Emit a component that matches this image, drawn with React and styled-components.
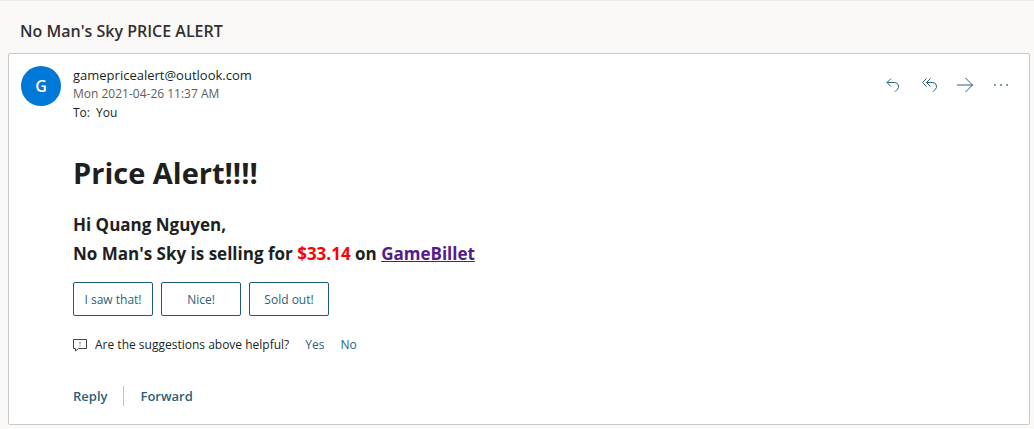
import React from "react";
import styled, { createGlobalStyle } from "styled-components";

const GlobalStyle = createGlobalStyle`
  * { box-sizing: border-box; }
  body {
    margin: 0;
    background: #faf9f8;
    color: #201f1e;
    font-family: "Segoe UI", "Open Sans", "Noto Sans", sans-serif;
    font-size: 12px;
    line-height: 20px;
  }
  h1, h2, p { margin: 0; }
`;

const Pane = styled.main`
  border-top: 1px solid #edebe9;
  padding: 0 4px 4px 8px;
`;

const Subject = styled.h1`
  padding: 18px 12px 10px;
  font-size: 16px;
  line-height: 24px;
  font-weight: 600;
  color: #323130;
`;

const Card = styled.article`
  background: #fff;
  border: 1px solid #c8c8c8;
  border-radius: 2px;
  padding: 11px 16px 18px 12px;
`;

const Header = styled.header`
  display: flex;
  gap: 12px;
`;

const Avatar = styled.div`
  width: 40px;
  height: 40px;
  margin-top: 1px;
  border-radius: 50%;
  background: #0078d7;
  color: #fff;
  font-size: 16px;
  font-weight: 600;
  line-height: 40px;
  text-align: center;
`;

const Meta = styled.div`
  flex: 1;
`;

const Sender = styled.div`
  font-size: 13px;
`;

const Sent = styled.time`
  display: block;
  line-height: 18px;
  color: #605e5c;
`;

const Recipients = styled.div`
  display: flex;
  gap: 6px;
`;

const ToLabel = styled.span`
  font-weight: 500;
`;

const Actions = styled.div`
  display: flex;
  gap: 12px;
  margin-top: 8px;
  height: 24px;
`;

const IconButton = styled.button`
  display: flex;
  align-items: center;
  justify-content: center;
  width: 24px;
  height: 24px;
  padding: 0;
  border: 0;
  background: none;
  color: #2b5f7c;
  cursor: pointer;
`;

const Body = styled.section`
  padding: 30px 0 0 52px;
`;

const Headline = styled.h1`
  font-size: 29px;
  line-height: 40px;
  font-weight: 700;
`;

const Message = styled.h2`
  margin-top: 17px;
  font-size: 17px;
  line-height: 29px;
  font-weight: 700;
`;

const Price = styled.span`
  color: #f00;
`;

const StoreLink = styled.a`
  color: #551a8b;
`;

const Suggestions = styled.div`
  display: flex;
  gap: 8px;
  margin-top: 14px;
`;

const SuggestionButton = styled.button`
  width: 80px;
  height: 34px;
  padding: 2px 0 0;
  border: 1px solid #1f5a78;
  border-radius: 2px;
  background: #fff;
  color: #2b5f7c;
  font: inherit;
  cursor: pointer;
`;

const Feedback = styled.div`
  display: flex;
  align-items: center;
  gap: 16px;
  margin-top: 19px;
`;

const Question = styled.span`
  display: flex;
  align-items: center;
  gap: 7px;
`;

const TextButton = styled.button`
  padding: 0;
  border: 0;
  background: none;
  color: #2b5f7c;
  font: inherit;
  cursor: pointer;
`;

const Footer = styled.footer`
  display: flex;
  align-items: center;
  margin-top: 31px;
`;

const FooterButton = styled(TextButton)`
  font-size: 13px;
  font-weight: 600;

  & + & {
    margin-left: 16px;
    padding-left: 16px;
    border-left: 1px solid #c8c6c4;
  }
`;

const Icon = ({ width = 18, height = 18, children }) => (
  <svg
    width={width}
    height={height}
    viewBox={`0 0 ${width} ${height}`}
    fill="none"
    stroke="currentColor"
    strokeWidth="1"
    aria-hidden="true"
  >
    {children}
  </svg>
);

const ReplyIcon = () => (
  <Icon>
    <path d="M7 2.500 3 6.500l4 4M3 6.500h7.500a4 4 0 0 1 2.800 6.900l-2.300 2.300" />
  </Icon>
);

const ReplyAllIcon = () => (
  <Icon>
    <path d="M6.500 2.500 2.500 6.500l4 4M10.500 2.500 6.500 6.500l4 4M6.500 6.500h6a4 4 0 0 1 2.800 6.900l-2.300 2.300" />
  </Icon>
);

const ForwardIcon = () => (
  <Icon>
    <path d="M1 9h16M9.5 2l7 7-7 7" />
  </Icon>
);

const MoreIcon = () => (
  <Icon>
    <path
      d="M2 8.200h1.600v1.600H2zM8.200 8.200h1.600v1.600H8.200zM14.400 8.200h1.600v1.600h-1.600z"
      fill="currentColor"
      stroke="none"
    />
  </Icon>
);

const FeedbackIcon = () => (
  <Icon width={15} height={14}>
    <path d="M.5 1.500h13v9H5.500l-3 2.500v-2.500h-2z" stroke="#484644" />
    <path d="M7 3.500v3M7 7.500v1" stroke="#7a7876" />
  </Icon>
);

const actions = [
  ["Reply", ReplyIcon],
  ["Reply all", ReplyAllIcon],
  ["Forward", ForwardIcon],
  ["More actions", MoreIcon],
];

const suggestions = ["I saw that!", "Nice!", "Sold out!"];

export default function App() {
  return (
    <>
      <GlobalStyle />
      <Pane>
        <Subject>No Man's Sky PRICE ALERT</Subject>
        <Card>
          <Header>
            <Avatar>G</Avatar>
            <Meta>
              <Sender>gamepricealert@outlook.com</Sender>
              <Sent dateTime="2021-04-26T11:37">Mon 2021-04-26 11:37 AM</Sent>
              <Recipients>
                <ToLabel>To:</ToLabel>
                <span>You</span>
              </Recipients>
            </Meta>
            <Actions>
              {actions.map(([label, Glyph]) => (
                <IconButton key={label} type="button" aria-label={label}>
                  <Glyph />
                </IconButton>
              ))}
            </Actions>
          </Header>
          <Body>
            <Headline>Price Alert!!!!</Headline>
            <Message>
              Hi Quang Nguyen,
              <br />
              No Man's Sky is selling for <Price>$33.14</Price> on{" "}
              <StoreLink href="#gamebillet">GameBillet</StoreLink>
            </Message>
            <Suggestions>
              {suggestions.map((text) => (
                <SuggestionButton key={text} type="button">
                  {text}
                </SuggestionButton>
              ))}
            </Suggestions>
            <Feedback>
              <Question>
                <FeedbackIcon />
                Are the suggestions above helpful?
              </Question>
              <TextButton type="button">Yes</TextButton>
              <TextButton type="button">No</TextButton>
            </Feedback>
            <Footer>
              <FooterButton type="button">Reply</FooterButton>
              <FooterButton type="button">Forward</FooterButton>
            </Footer>
          </Body>
        </Card>
      </Pane>
    </>
  );
}
